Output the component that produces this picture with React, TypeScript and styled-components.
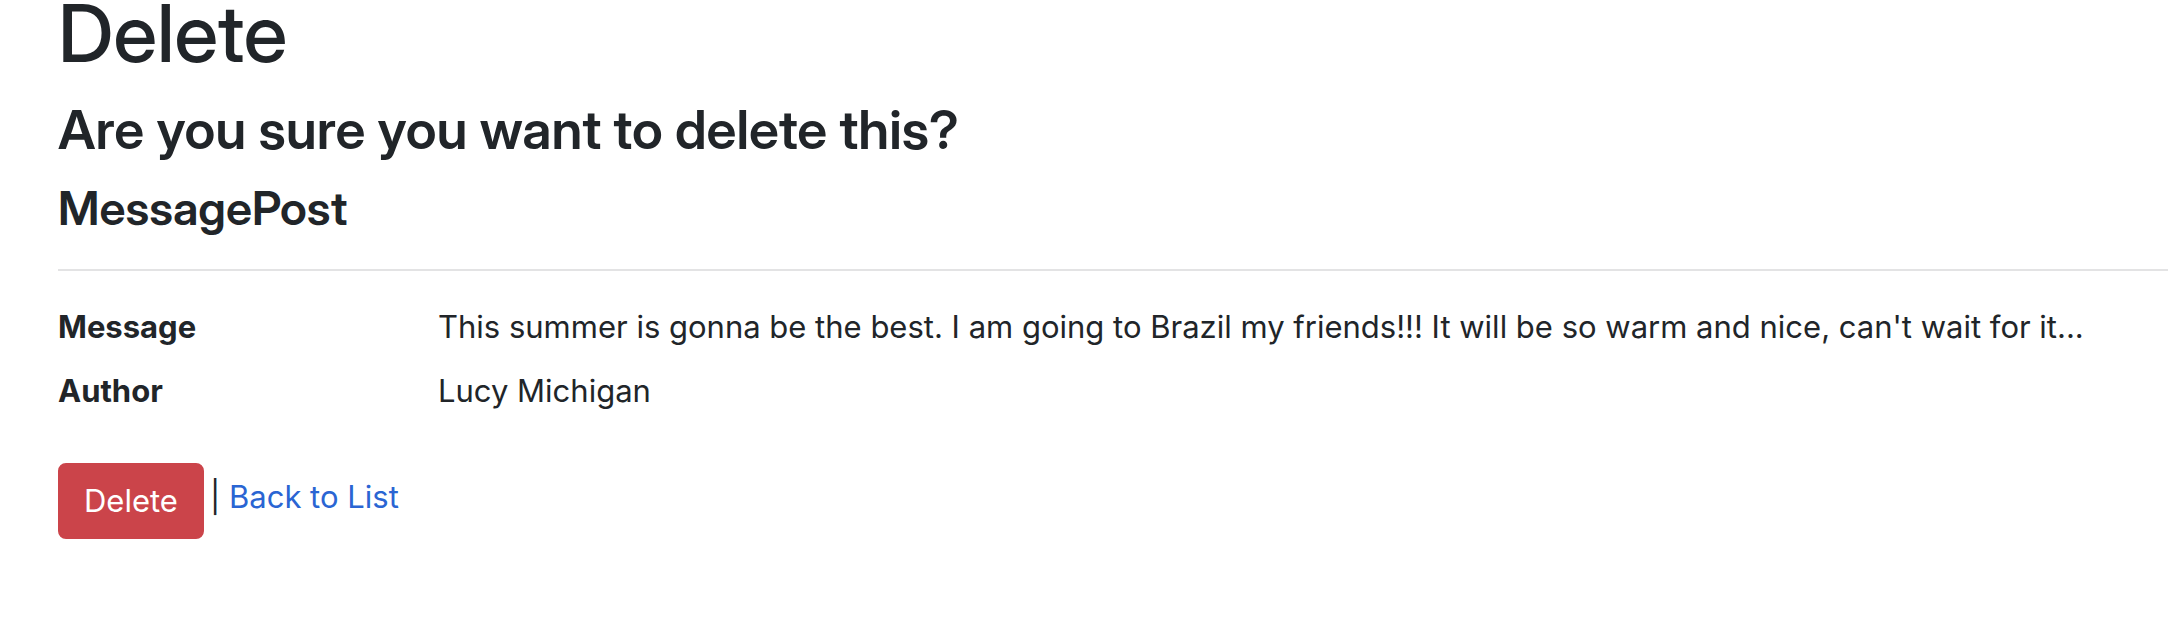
import React from "react";
import styled, { createGlobalStyle } from "styled-components";

const Global = createGlobalStyle`
  *, *::before, *::after { box-sizing: border-box; }
  body {
    margin: 0;
    background: #fff;
    color: #212529;
    font-family: Inter, "Liberation Sans", sans-serif;
    font-size: 31px;
    line-height: 48px;
  }
  h1, h3, h4 {
    font-family: "Inter Display", Inter, "Liberation Sans", sans-serif;
    font-weight: 600;
  }
`;

const Page = styled.main`
  padding: 0 0 0 58px;
`;

const Title = styled.h1`
  margin: 0 0 30px;
  font-size: 80px;
  font-weight: 500;
  line-height: 66px;
`;

const Question = styled.h3`
  margin: 0 0 16px;
  font-size: 54px;
  line-height: 68px;
`;

const Entity = styled.h4`
  margin: 0;
  font-size: 47px;
  line-height: 56px;
`;

const Divider = styled.hr`
  margin: 33px 0 32px;
  border: 0;
  border-top: 2px solid #e3e3e4;
`;

const Details = styled.dl`
  display: grid;
  grid-template-columns: 380px 1fr;
  row-gap: 16px;
  margin: 0 0 48px;
`;

const Term = styled.dt`
  font-weight: 700;
`;

const Value = styled.dd`
  margin: 0;
`;

const Actions = styled.form`
  display: flex;
  align-items: flex-start;
  gap: 6px;
`;

const DeleteButton = styled.button`
  padding: 12px 24px;
  border: 2px solid #cb444a;
  border-radius: 8px;
  background: #cb444a;
  color: #fff;
  font: inherit;
  cursor: pointer;
`;

const Alternative = styled.div`
  padding: 10px 0;
`;

const BackLink = styled.a`
  color: #2a65d3;
  text-decoration: none;
`;

export default function App() {
  return (
    <>
      <Global />
      <Page>
        <Title>Delete</Title>
        <Question>Are you sure you want to delete this?</Question>
        <Entity>MessagePost</Entity>
        <Divider />
        <Details>
          <Term>Message</Term>
          <Value>This summer is gonna be the best. I am going to Brazil my friends!!! It will be so warm and nice, can't wait for it...</Value>
          <Term>Author</Term>
          <Value>Lucy Michigan</Value>
        </Details>
        <Actions onSubmit={(event) => event.preventDefault()}>
          <DeleteButton type="submit">Delete</DeleteButton>
          <Alternative>
            | <BackLink href="#list">Back to List</BackLink>
          </Alternative>
        </Actions>
      </Page>
    </>
  );
}
